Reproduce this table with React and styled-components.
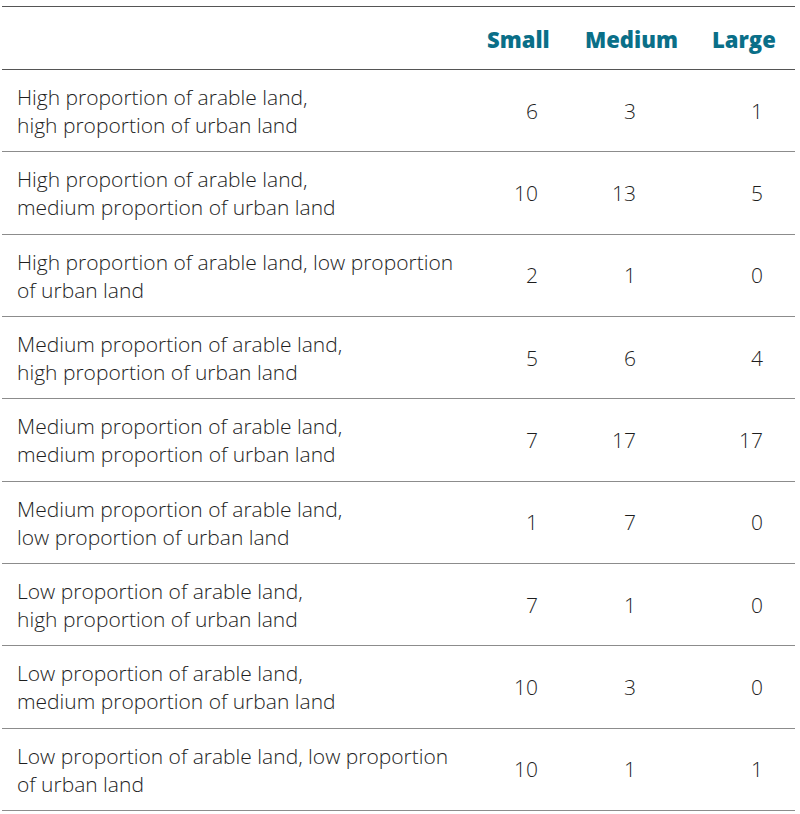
import React from "react";
import styled, { createGlobalStyle } from "styled-components";

const Global = createGlobalStyle`
  html, body { margin: 0; padding: 0; background: #fff; }
  body { font-family: "Open Sans", "Liberation Sans", sans-serif; }
`;

const cols = [
  { key: "small", label: "Small", numPad: 31 },
  { key: "medium", label: "Medium", numPad: 60 },
  { key: "large", label: "Large", numPad: 32 },
];

const rows = [
  ["High proportion of arable land,", "high proportion of urban land", 6, 3, 1],
  ["High proportion of arable land,", "medium proportion of urban land", 10, 13, 5],
  ["High proportion of arable land, low proportion", "of urban land", 2, 1, 0],
  ["Medium proportion of arable land,", "high proportion of urban land", 5, 6, 4],
  ["Medium proportion of arable land,", "medium proportion of urban land", 7, 17, 17],
  ["Medium proportion of arable land,", "low proportion of urban land", 1, 7, 0],
  ["Low proportion of arable land,", "high proportion of urban land", 7, 1, 0],
  ["Low proportion of arable land,", "medium proportion of urban land", 10, 3, 0],
  ["Low proportion of arable land, low proportion", "of urban land", 10, 1, 1],
];

const Page = styled.div`
  padding: 6px 5px 0 2px;
`;

const Table = styled.div`
  width: 793px;
  border-top: 1px solid #555;
`;

const Row = styled.div`
  display: grid;
  grid-template-columns: 469px 98px 127px 99px;
  box-sizing: border-box;
  height: ${(p) => (p.$head ? "63px" : "82.33px")};
  border-bottom: 1px solid ${(p) => (p.$head ? "#555" : "#8c8c8c")};
  align-items: center;
`;

const HeadCell = styled.div`
  padding-left: 16px;
  padding-top: 2px;
  font-family: "Open Sans", "Liberation Sans", sans-serif;
  font-weight: 800;
  font-size: 22px;
  color: #0a6f88;
  white-space: nowrap;
`;

const Label = styled.div`
  padding-left: 15px;
  padding-top: 1px;
  font-weight: 300;
  font-size: 21px;
  line-height: 28px;
  color: #1e1e1e;
  white-space: nowrap;
`;

const Num = styled.div`
  text-align: right;
  padding-right: ${(p) => p.$pad}px;
  font-weight: 300;
  font-size: 21px;
  color: #1e1e1e;
`;

export default function App() {
  return (
    <>
      <Global />
      <Page>
        <Table>
          <Row $head>
            <div />
            {cols.map((c) => (
              <HeadCell key={c.key}>{c.label}</HeadCell>
            ))}
          </Row>
          {rows.map((r, i) => (
            <Row key={i}>
              <Label>
                {r[0]}
                <br />
                {r[1]}
              </Label>
              {cols.map((c, j) => (
                <Num key={c.key} $pad={c.numPad}>
                  {r[2 + j]}
                </Num>
              ))}
            </Row>
          ))}
        </Table>
      </Page>
    </>
  );
}
